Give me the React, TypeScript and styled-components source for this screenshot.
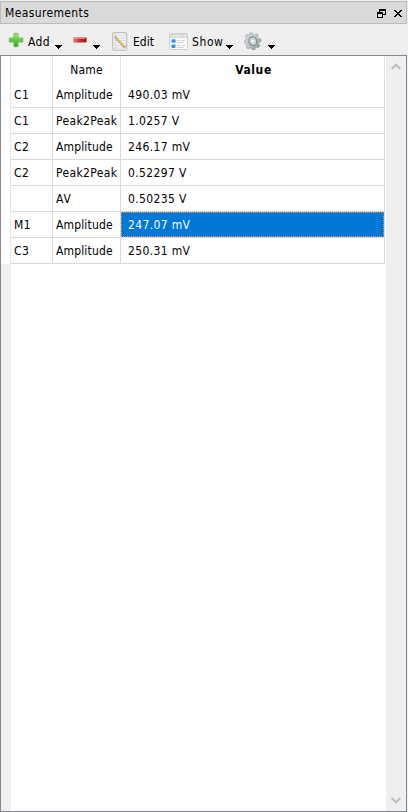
import React from "react";
import styled, { createGlobalStyle } from "styled-components";

const GlobalStyle = createGlobalStyle`
  html, body { margin: 0; background: #efefef; overflow: hidden; }
  * { box-sizing: border-box; }
  svg { display: block; flex: none; }
`;

const Panel = styled.div`
  width: 407px;
  height: 812px;
  padding-top: 1px;
  display: flex;
  flex-direction: column;
  font: 12px/16px "DejaVu Sans Condensed", "DejaVu Sans", sans-serif;
  font-stretch: condensed;
  color: #000;
  white-space: nowrap;
`;

const TitleBar = styled.header`
  height: 23px;
  flex: none;
  display: flex;
  align-items: center;
  padding: 1px 4px 0 4px;
  border: 1px solid #bcbcbc;
  background: #dadada;
`;

const Title = styled.span`
  flex: 1;
  letter-spacing: 0.37px;
`;

const WindowIcon = styled.svg<{ $gap?: number }>`
  margin-left: ${(p) => p.$gap ?? 0}px;
`;

const ToolBar = styled.div`
  height: 31px;
  flex: none;
  display: flex;
  align-items: center;
  gap: 11px;
  padding: 3px 0 0 8px;
`;

const Tool = styled.div<{ $width: number; $gap: number }>`
  width: ${(p) => p.$width}px;
  height: 24px;
  display: flex;
  align-items: center;
  gap: ${(p) => p.$gap}px;
`;

const Text = styled.span<{ $spacing?: number }>`
  letter-spacing: ${(p) => p.$spacing ?? 0}px;
`;

const ToolLabel = styled(Text)`
  padding-top: 1px;
  margin-right: -4px;
`;

const Glyph = styled.svg`
  margin-bottom: 2px;
`;

const Arrow = styled.svg`
  margin: 12px 0 0 auto;
`;

const Frame = styled.div`
  flex: 1;
  display: flex;
  border: 1px solid #828790;
  background: #fff;
`;

const Sheet = styled.div`
  width: 385px;
  display: flex;
  flex-direction: column;
`;

const Columns = styled.div`
  display: grid;
  grid-template-columns: 10px 42px 68px 264px;
  flex: none;
`;

const HeaderCell = styled.div<{ $bold?: boolean }>`
  height: 26px;
  padding: 6px 0 0 ${(p) => (p.$bold ? 2 : 0)}px;
  text-align: center;
  border-right: 1px solid #e5e5e5;
  font-weight: ${(p) => (p.$bold ? 700 : 400)};
  letter-spacing: ${(p) => (p.$bold ? 0.6 : 0.15)}px;
`;

const Cell = styled.div<{ $indent?: number }>`
  height: 26px;
  padding: 5px 0 0 ${(p) => p.$indent ?? 3}px;
  border-right: 1px solid #d8d8d8;
  border-bottom: 1px solid #d8d8d8;
`;

const SelectedCell = styled(Cell)`
  padding: 0;
  color: #fff;
  background: #0078d7;
`;

const Focus = styled.div`
  height: 25px;
  padding: 4px 0 0 6px;
  border: 1px dotted #ef9148;
`;

const Gutter = styled.div`
  height: 26px;
  border-right: 1px solid #e5e5e5;
`;

const EmptyGutter = styled.div`
  width: 10px;
  flex: 1;
  background: #efefef;
`;

const ScrollBar = styled.div`
  width: 20px;
  display: flex;
  flex-direction: column;
  justify-content: space-between;
  align-items: center;
  padding: 7px 1px 7px 0;
  background: #efefef;
`;

const rows = [
  { source: "C1", name: "Amplitude", value: "490.03 mV" },
  { source: "C1", name: "Peak2Peak", value: "1.0257 V" },
  { source: "C2", name: "Amplitude", value: "246.17 mV" },
  { source: "C2", name: "Peak2Peak", value: "0.52297 V" },
  { source: "", name: "AV", value: "0.50235 V" },
  { source: "M1", name: "Amplitude", value: "247.07 mV", selected: true },
  { source: "C3", name: "Amplitude", value: "250.31 mV" },
];

const nameSpacing: Record<string, number> = { Amplitude: 0.15, Peak2Peak: 0.36, AV: 1 };

const DropArrow = () => (
  <Arrow width="7" height="4" viewBox="0 0 7 4" shapeRendering="crispEdges">
    <path d="M0 0h7v1H0zM1 1h5v1H1zM2 2h3v1H2zM3 3h1v1H3z" />
  </Arrow>
);

const PlusIcon = () => (
  <Glyph width="16" height="16" viewBox="0 0 16 16">
    <defs>
      <linearGradient id="green" x2="0" y2="1">
        <stop stopColor="#a8e888" />
        <stop offset=".55" stopColor="#5ccb3a" />
        <stop offset="1" stopColor="#2ea122" />
      </linearGradient>
    </defs>
    <path d="M6 1.3h4V6h4.8v4H10v4.7H6V10H1.3V6H6z" fill="url(#green)" stroke="#6cbc52" strokeWidth=".9" strokeLinejoin="round" />
  </Glyph>
);

const MinusIcon = () => (
  <Glyph width="14" height="16" viewBox="1 0 14 16">
    <defs>
      <linearGradient id="red">
        <stop stopColor="#ea8587" />
        <stop offset=".45" stopColor="#d02d33" />
        <stop offset="1" stopColor="#ad0b14" />
      </linearGradient>
    </defs>
    <rect x="1.3" y="5.5" width="13.4" height="5" rx="1.2" fill="url(#red)" stroke="#d99090" strokeWidth=".8" />
    <path d="M2 6.5h11" stroke="#f1a7a7" strokeWidth=".7" />
  </Glyph>
);

const EditIcon = () => (
  <svg width="17" height="19" viewBox="-1 0 17 19">
    <rect x=".7" y=".7" width="14" height="17.4" rx="1.2" fill="#f4f5fa" stroke="#c2c2bf" strokeWidth="1.3" />
    <path d="M2 3.5h12M2 6h12M2 8.5h12M2 11h12M2 13.5h12M2 16h12" stroke="#ccd6ea" strokeWidth=".8" />
    <path d="M4 1.5v16" stroke="#edc8d2" strokeWidth=".7" />
    <path d="M3.5 5.5 12.7 15" stroke="#a39355" strokeWidth="2.3" />
    <path d="m4 5.7 8.6 8.7" stroke="#efcf58" strokeWidth="1.4" />
    <path d="m2.4 4.2 1.8.5-1.1 1.2z" fill="#777" />
    <path d="m12.3 14.4 1.1 1.1" stroke="#d49a91" strokeWidth="2" />
  </svg>
);

const ListIcon = () => (
  <svg width="19" height="17" viewBox="0 0 19 17">
    <rect x=".5" y=".5" width="18" height="16" rx=".7" fill="#fbfbfb" stroke="#cfcfcf" />
    <path d="M1 1h17v4H1z" fill="#d9d9d9" />
    <path d="M2 3h11M15 3h2" stroke="#eee" />
    <rect x="2.5" y="6.3" width="4" height="3.4" rx="1" fill="#348ff1" />
    <rect x="2.5" y="11.6" width="4" height="3.4" rx="1" fill="#348ff1" />
    <path d="M8 7.5h3M12 7.5h4M8 9.5h7M8 12.5h4M13 12.5h3M8 14.5h7" stroke="#c9c9c9" strokeWidth=".8" />
  </svg>
);

const GearIcon = () => (
  <svg width="18" height="18" viewBox="0 0 18 18">
    <defs>
      <linearGradient id="steel" x2="1" y2="1">
        <stop stopColor="#d1d5d5" />
        <stop offset=".5" stopColor="#c0c6c7" />
        <stop offset="1" stopColor="#77858a" />
      </linearGradient>
    </defs>
    <path d="m5.6.9 2.4-.3 1.1 2 1.4.3 1.8-1.3 2 1.5-.6 2.2.8 1.2 2.4.5.2 2.5-2.1 1-.4 1.3 1.4 1.9-1.5 2-2.1-.5-1.1.7-.4 2-2.5.2-1.2-1.9-1.3-.3-1.9 1.1-1.9-1.6.7-2.1-.7-1.2L.6 11 .3 8.6l2-1 .3-1.4L1.3 4.3 2.9 2.5l1.9.7z" fill="url(#steel)" stroke="#9ca5a8" strokeWidth=".6" />
    <ellipse cx="8.8" cy="9.1" rx="3.8" ry="4.4" fill="#d9dddd" stroke="#75848a" strokeWidth="1" transform="rotate(-18 8.8 9.1)" />
    <circle cx="8.8" cy="9.1" r="2.1" fill="#fafafa" stroke="#a1abad" strokeWidth=".6" />
  </svg>
);

export default function App() {
  return (
    <>
      <GlobalStyle />
      <Panel>
        <TitleBar>
          <Title>Measurements</Title>
          <WindowIcon width="9" height="9" viewBox="0 0 9 9" shapeRendering="crispEdges">
            <path fillRule="evenodd" d="M2 0h7v6H6v3H0V3h2zM3 2v1h3v2h2V2zM1 5v3h4V5z" />
          </WindowIcon>
          <WindowIcon $gap={8} width="8" height="7" viewBox="0 0 8 7" shapeRendering="crispEdges">
            <path d="M0 0h2v1H0zM6 0h2v1H6zM1 1h2v1H1zM5 1h2v1H5zM2 2h4v1H2zM3 3h2v1H3zM2 4h4v1H2zM1 5h2v1H1zM5 5h2v1H5zM0 6h2v1H0zM6 6h2v1H6z" />
          </WindowIcon>
        </TitleBar>
        <ToolBar>
          <Tool $width={54} $gap={4}><PlusIcon /><ToolLabel $spacing={0.4}>Add</ToolLabel><DropArrow /></Tool>
          <Tool $width={27} $gap={4}><MinusIcon /><DropArrow /></Tool>
          <Tool $width={47} $gap={5}><EditIcon /><ToolLabel>Edit</ToolLabel></Tool>
          <Tool $width={64} $gap={4}><ListIcon /><ToolLabel $spacing={0.6}>Show</ToolLabel><DropArrow /></Tool>
          <Tool $width={31} $gap={4}><GearIcon /><DropArrow /></Tool>
        </ToolBar>
        <Frame>
          <Sheet>
            <Columns>
              <HeaderCell />
              <HeaderCell />
              <HeaderCell>Name</HeaderCell>
              <HeaderCell $bold>Value</HeaderCell>
            </Columns>
            {rows.map((row) => (
              <Columns key={`${row.source}-${row.name}`}>
                <Gutter />
                <Cell><Text $spacing={0.4}>{row.source}</Text></Cell>
                <Cell><Text $spacing={nameSpacing[row.name]}>{row.name}</Text></Cell>
                {row.selected ? (
                  <SelectedCell><Focus><Text $spacing={0.36}>{row.value}</Text></Focus></SelectedCell>
                ) : (
                  <Cell $indent={7}><Text $spacing={0.36}>{row.value}</Text></Cell>
                )}
              </Columns>
            ))}
            <EmptyGutter />
          </Sheet>
          <ScrollBar>
            <svg width="10" height="8" viewBox="0 0 10 8"><path d="m.7 6 4.3-4.3L9.3 6" fill="none" stroke="#bdbdbd" strokeWidth="2" /></svg>
            <svg width="10" height="8" viewBox="0 0 10 8"><path d="m.7 2 4.3 4.3L9.3 2" fill="none" stroke="#bdbdbd" strokeWidth="2" /></svg>
          </ScrollBar>
        </Frame>
      </Panel>
    </>
  );
}
